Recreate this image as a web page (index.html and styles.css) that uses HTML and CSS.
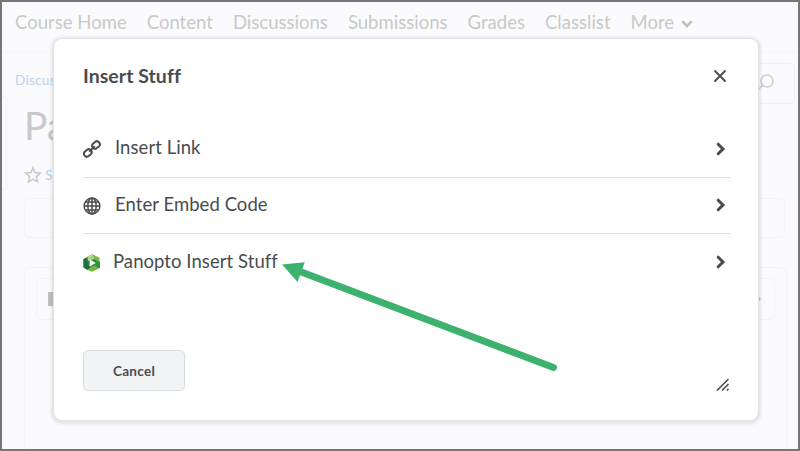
FILE: index.html
```html
<!DOCTYPE html>
<html lang="en">
<head>
  <meta charset="UTF-8" />
  <title>Insert Stuff</title>
  <link rel="stylesheet" href="styles.css">
</head>
<body>

  <!-- Course page behind the dialog -->
  <div class="page">
    <nav class="navbar">
      <a>Course Home</a>
      <a>Content</a>
      <a>Discussions</a>
      <a>Submissions</a>
      <a>Grades</a>
      <a>Classlist</a>
      <a>More <svg class="caret" viewBox="0 0 12 8"><path d="M2 2l4 4 4-4" /></svg></a>
    </nav>

    <div class="content">
      <div class="side-panel"></div>
      <main class="main">
        <div class="top-row">
          <div class="breadcrumb">Discuss</div>
          <div class="search">
            <svg viewBox="0 0 18 18"><circle cx="11" cy="7" r="6" /><path d="M6.500 11.500L2 16" /></svg>
          </div>
        </div>
        <h1>Pa</h1>
        <div class="subscribe">
          <svg viewBox="0 0 18 18"><path d="M9 1.800l2.100 4.700 5.200.6-3.900 3.500 1.100 5.300L9 13.300l-4.500 2.600 1.100-5.300L1.700 7.100l5.200-.6z" /></svg>
          <span>S</span>
        </div>
        <div class="filter-box"></div>
        <div class="editor">
          <div class="toolbar">
            <i class="tool"></i>
            <i class="tool-more"></i>
          </div>
        </div>
      </main>
    </div>
  </div>

  <!-- Dialog -->
  <div class="dialog">
    <div class="dialog-header">
      <h2>Insert Stuff</h2>
      <svg class="close" viewBox="0 0 14 14"><path d="M2 2l10 10M12 2L2 12" /></svg>
    </div>

    <ul class="options">
      <li>
        <svg class="icon link" viewBox="0 0 18 18">
          <rect x="-4.100" y="-2.900" width="8.200" height="5.800" rx="2.900" transform="translate(13 5) rotate(-40)" />
          <rect x="-4.100" y="-2.900" width="8.200" height="5.800" rx="2.900" transform="translate(4.800 13) rotate(-40)" />
          <path d="M6.300 11.700l5.400-5.400" />
        </svg>
        <span>Insert Link</span>
        <svg class="chevron" viewBox="0 0 10 14"><path d="M2.200 2.200L7 7l-4.800 4.800" /></svg>
      </li>
      <li>
        <svg class="icon globe" viewBox="0 0 18 18">
          <circle cx="9" cy="9" r="7.900" />
          <ellipse cx="9" cy="9" rx="4.200" ry="7.900" />
          <path d="M9 1v16M1 9h16M2.500 5h13M2.500 13h13" />
        </svg>
        <span>Enter Embed Code</span>
        <svg class="chevron" viewBox="0 0 10 14"><path d="M2.200 2.200L7 7l-4.800 4.800" /></svg>
      </li>
      <li class="panopto">
        <svg class="icon" viewBox="0 0 18 18">
          <path fill="#2c8a40" d="M4.500 3.500L13 4l4 4v5.500L9 17l-7-3z" />
          <path fill="#7fb84a" d="M4.500 2.500L9.500.3l7 3.400v5L11 5 4.500 7z" />
          <path fill="#b5d78b" d="M4.500 2.500L9.500.3 11 5 4.500 7z" />
          <path fill="#1e7038" d="M.3 5L4.500 3v8.500l4 2L4.500 16 .3 13.500z" />
          <path fill="#2f9044" d="M12.500 6L17 8.500v5.300L12 16l-1.500-4z" />
          <path fill="#74b53e" d="M4.500 15.700L8.500 12.500l4-1 3 3-6.500 3.300z" />
          <path fill="#fff" d="M6.700 5.500l6 3.600-6 3.500z" />
        </svg>
        <span>Panopto Insert Stuff</span>
        <svg class="chevron" viewBox="0 0 10 14"><path d="M2.200 2.200L7 7l-4.800 4.800" /></svg>
      </li>
    </ul>

    <div class="dialog-footer">
      <button class="cancel">Cancel</button>
      <svg class="resize" viewBox="0 0 14 14"><path d="M1.500 12L12 1.500M6.500 12L12 6.500M11.300 12l.7-.7" /></svg>
    </div>
  </div>

  <!-- Arrow pointing at the Panopto option -->
  <svg class="arrow" viewBox="0 0 280 115">
    <path class="shaft" d="M20 11.500L273.500 107.500" />
    <path class="head" d="M2 4.500L24.700 2.200 17.500 22z" />
  </svg>

</body>
</html>
```
FILE: styles.css
```css
* {
  box-sizing: border-box;
  margin: 0;
  padding: 0;
  font-family: Lato, "Liberation Sans", sans-serif;
}

body {
  width: 800px;
  height: 451px;
  overflow: hidden;
  position: relative;
  color: #494c4e;
}

svg {
  display: block;
  flex: none;
  fill: none;
  stroke: #494c4e;
}

/* Page behind */
.page {
  height: 451px;
  border: 2px solid #767676;
  background: #fbfbfd;
  display: flex;
  flex-direction: column;
}

.navbar {
  height: 51px;
  padding: 0 0 11px 13px;
  display: flex;
  align-items: center;
  gap: 20px;
  border-bottom: 1px solid #f5f6f9;
  font-size: 18.5px;
  letter-spacing: 0.02px;
  color: #c8c9ca;
  white-space: nowrap;
}

.navbar a {
  display: flex;
  align-items: center;
}

.caret {
  width: 12px;
  height: 8px;
  margin: 4px 0 0 7px;
  stroke: #c0c1c3;
  stroke-width: 2.5;
  stroke-linecap: round;
}

.content {
  flex: 1;
  display: flex;
  min-height: 0;
}

.side-panel {
  width: 5px;
  height: 94px;
  margin-top: 43px;
  border: 1px solid #f1f2f5;
  border-left: none;
  border-radius: 0 4px 4px 0;
}

.main {
  flex: 1;
  display: flex;
  flex-direction: column;
  padding: 10px 13px 0 17px;
}

.top-row {
  display: flex;
  justify-content: space-between;
  height: 41px;
  margin: 0 -10px 0 -9px;
}

.breadcrumb {
  padding-top: 8px;
  font-size: 13.5px;
  line-height: 18px;
  letter-spacing: 0.3px;
  color: #b4d3ee;
}

.search {
  width: 180px;
  height: 41px;
  border: 1px solid #f0f1f4;
  border-radius: 5px;
  padding: 10px 20px 0 0;
}

.search svg {
  width: 18px;
  height: 18px;
  margin-left: auto;
  stroke: #cfd0d2;
  stroke-width: 1.7;
}

h1 {
  height: 62px;
  font-size: 39px;
  font-weight: 400;
  line-height: 42px;
  color: #c8c9ca;
}

.subscribe {
  display: flex;
  align-items: center;
  gap: 3px;
  height: 18px;
  font-size: 13.5px;
  color: #b4d3ee;
}

.subscribe svg {
  width: 18px;
  height: 18px;
  stroke: #c8c9ca;
  stroke-width: 1.6;
}

.filter-box {
  height: 40px;
  margin-top: 14px;
  border: 1px solid #f3f4f6;
  border-radius: 6px;
}

.editor {
  flex: 1;
  margin: 29px -2px 0 0;
  padding: 10px 11px;
  border: 1px solid #f3f4f6;
  border-bottom: none;
  border-radius: 6px 6px 0 0;
}

.toolbar {
  display: flex;
  align-items: center;
  justify-content: space-between;
  height: 42px;
  padding: 0 13px 0 11px;
  border: 1px solid #f3f4f6;
  border-radius: 5px;
}

.tool {
  width: 14px;
  height: 14px;
  background: #c0c1c3;
}

.tool-more {
  border: 4px solid transparent;
  border-left-color: #c0c1c3;
  border-right: none;
}

/* Dialog */
.dialog {
  position: absolute;
  left: 54px;
  top: 39px;
  width: 704px;
  height: 381px;
  padding: 26px 28px 29px 29px;
  display: flex;
  flex-direction: column;
  background: #fff;
  border-radius: 8px;
  box-shadow: 0 0 0 1px #e2e3e8, 0 1px 3px 3px rgba(70, 75, 85, 0.12);
}

.dialog-header {
  display: flex;
  justify-content: space-between;
  height: 56px;
  padding-right: 3px;
}

h2 {
  font-size: 19.5px;
  font-weight: 700;
  line-height: 22px;
  letter-spacing: 0.05px;
}

.close {
  width: 14px;
  height: 14px;
  margin-top: 4px;
  stroke-width: 1.9;
  stroke-linecap: round;
}

.options {
  list-style: none;
}

.options li {
  display: flex;
  align-items: center;
  height: 56.5px;
  padding-right: 4px;
  border-bottom: 1px solid #d8dce3;
  font-size: 18.5px;
  letter-spacing: 0.06px;
}

.options li:last-child {
  border-bottom: none;
}

.options span {
  flex: 1;
  margin: -3px 0 0 14px;
}

.options .panopto span {
  margin-left: 12px;
}

.icon {
  width: 18px;
  height: 18px;
}

.link {
  margin-top: 1px;
  stroke-width: 2;
}

.globe {
  margin-top: 1px;
  stroke-width: 1.5;
}

.panopto .icon {
  stroke: none;
  margin-top: 1px;
}

.panopto .chevron {
  margin-top: -1px;
}

.chevron {
  width: 10px;
  height: 14px;
  stroke-width: 3;
  stroke-linecap: round;
}

.dialog-footer {
  display: flex;
  justify-content: space-between;
  align-items: flex-end;
  margin-top: auto;
}

.cancel {
  width: 102px;
  height: 41px;
  border: 1px solid #d8dce3;
  border-radius: 5px;
  background: #f2f3f5;
  font-size: 13.5px;
  font-weight: 700;
  letter-spacing: 0.3px;
  color: #494c4e;
}

.resize {
  width: 14px;
  height: 14px;
  margin-bottom: -1px;
  stroke-width: 1.7;
  stroke-linecap: round;
}

.arrow {
  position: absolute;
  left: 280px;
  top: 260px;
  width: 280px;
  height: 115px;
}

.shaft {
  stroke: #3cb26e;
  stroke-width: 7;
  stroke-linecap: round;
}

.head {
  fill: #3cb26e;
  stroke: none;
}
```
